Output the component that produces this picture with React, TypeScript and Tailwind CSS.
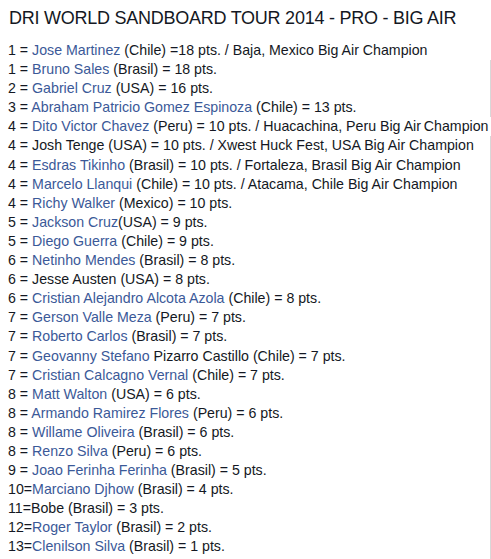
import React from 'react';

type Row = { pre: string; name?: string; post: string; gap?: boolean };

const rows: Row[] = [
  { pre: '1 = ', name: 'Bruno Sales', post: ' (Brasil) = 18 pts.' },
  { pre: '2 = ', name: 'Gabriel Cruz', post: ' (USA) = 16 pts.' },
  { pre: '3 = ', name: 'Abraham Patricio Gomez Espinoza', post: ' (Chile) = 13 pts.' },
  { pre: '4 = ', name: 'Dito Victor Chavez', post: ' (Peru) = 10 pts. / Huacachina, Peru Big Air\u2009Champion', gap: true },
  { pre: '4 = Josh Tenge (USA) = 10 pts. / Xwest Huck Fest, USA Big Air Champion', post: '' },
  { pre: '4 = ', name: 'Esdras Tikinho', post: ' (Brasil) = 10 pts. / Fortaleza, Brasil Big Air Champion' },
  { pre: '4 = ', name: 'Marcelo Llanqui', post: ' (Chile) = 10 pts. / Atacama, Chile Big Air Champion' },
  { pre: '4 = ', name: 'Richy Walker', post: ' (Mexico) = 10 pts.' },
  { pre: '5 = ', name: 'Jackson Cruz', post: '(USA) = 9 pts.' },
  { pre: '5 = ', name: 'Diego Guerra', post: ' (Chile) = 9 pts.' },
  { pre: '6 = ', name: 'Netinho Mendes', post: ' (Brasil) = 8 pts.' },
  { pre: '6 = Jesse Austen (USA) = 8 pts.', post: '' },
  { pre: '6 = ', name: 'Cristian Alejandro Alcota Azola', post: ' (Chile) = 8 pts.' },
  { pre: '7 = ', name: 'Gerson Valle Meza', post: ' (Peru) = 7 pts.' },
  { pre: '7 = ', name: 'Roberto Carlos', post: ' (Brasil) = 7 pts.' },
  { pre: '7 = ', name: 'Geovanny Stefano', post: ' Pizarro Castillo (Chile) = 7 pts.' },
  { pre: '7 = ', name: 'Cristian Calcagno Vernal', post: ' (Chile) = 7 pts.' },
  { pre: '8 = ', name: 'Matt Walton', post: ' (USA) = 6 pts.' },
  { pre: '8 = ', name: 'Armando Ramirez Flores', post: ' (Peru) = 6 pts.' },
  { pre: '8 = ', name: 'Willame Oliveira', post: ' (Brasil) = 6 pts.' },
  { pre: '8 = ', name: 'Renzo Silva', post: ' (Peru) = 6 pts.' },
  { pre: '9 = ', name: 'Joao Ferinha Ferinha', post: ' (Brasil) = 5 pts.' },
  { pre: '10=', name: 'Marciano Djhow', post: ' (Brasil) = 4 pts.' },
  { pre: '11=Bobe (Brasil) = 3 pts.', post: '' },
  { pre: '12=', name: 'Roger Taylor', post: ' (Brasil) = 2 pts.' },
  { pre: '13=', name: 'Clenilson Silva', post: ' (Brasil) = 1 pts.' },
];

const Line = ({ row }: { row: Row }) => (
  <div className={row.gap ? 'relative -mr-px bg-white whitespace-nowrap' : 'whitespace-nowrap'}>
    {row.pre}
    {row.name && <a className="text-[#3b5998]">{row.name}</a>}
    {row.post}
  </div>
);

export default function App() {
  return (
    <div className="w-[491px] h-[559px] overflow-hidden bg-white pt-[6px] pl-[8px] font-['Liberation_Sans',Arial,sans-serif] text-[#141823]">
      <h1 className="ml-[1px] text-[18px] leading-[24px] tracking-[-0.25px] whitespace-nowrap">
        DRI WORLD SANDBOARD TOUR 2014 - PRO - BIG AIR
      </h1>
      <div className="mt-[11px] text-[14.2px] leading-[19.1px]">
        <div className="whitespace-nowrap">
          1 = <a className="text-[#3b5998]">Jose Martinez</a> (Chile) =18 pts. / Baja, Mexico Big Air Champion
        </div>
        <div className="border-r border-[#d8d8d8] pb-[2px]">
          {rows.map((r, i) => (
            <Line key={i} row={r} />
          ))}
        </div>
      </div>
    </div>
  );
}
